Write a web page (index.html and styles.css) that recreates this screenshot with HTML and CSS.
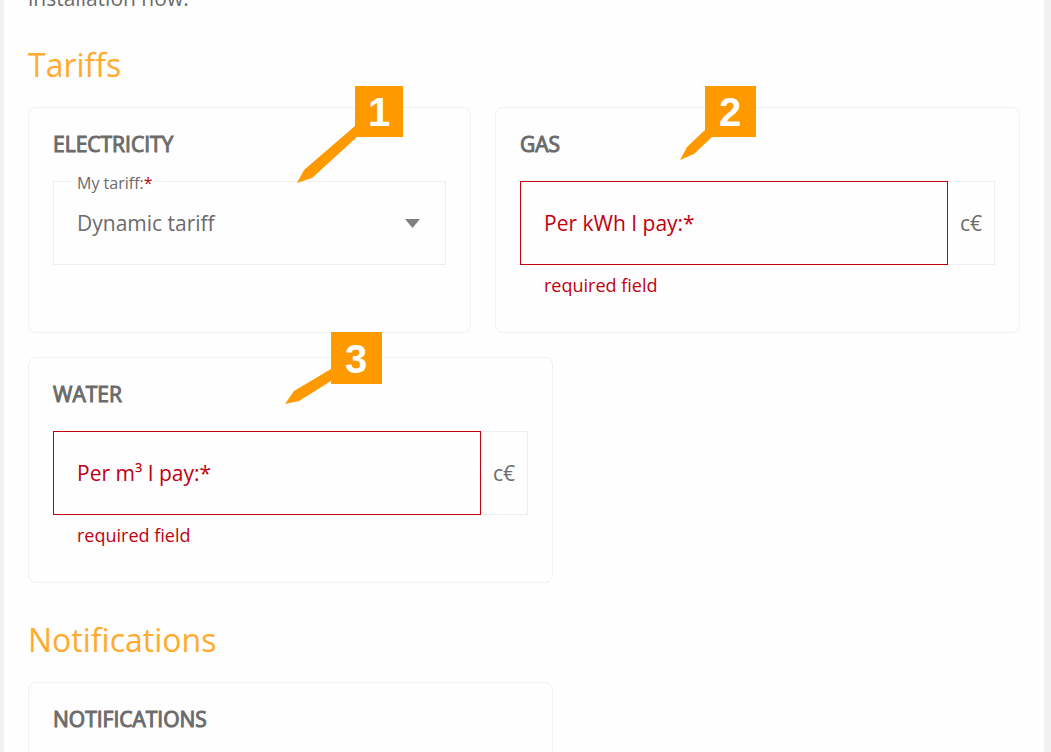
FILE: index.html
```html
<!DOCTYPE html>
<html lang="en">
<head>
    <meta charset="UTF-8">
    <meta name="viewport" content="width=device-width, initial-scale=1.0">
    <title>Tariffs</title>
    <link rel="stylesheet" href="styles.css">
</head>
<body>
    <main class="page">
        <p class="intro">installation now.</p>

        <!-- Tariffs -->
        <h2 class="section-title">Tariffs</h2>
        <div class="cards">
            <section class="card card-small">
                <h3 class="card-title">ELECTRICITY</h3>
                <div class="select-field">
                    <label class="select-label" for="tariff">My tariff:<span class="required">*</span></label>
                    <select class="select" id="tariff">
                        <option>Dynamic tariff</option>
                    </select>
                    <svg class="select-arrow" width="16" height="9" viewBox="0 0 16 9" aria-hidden="true"><path d="M0 0H15L7.5 9Z" fill="#808080"/></svg>
                </div>
                <svg class="callout callout-1" width="106" height="98" viewBox="0 0 106 98">
                    <path d="M58 0H106V51H60L15 92L0 97L7 84L58 40Z" fill="#ff9900"/>
                    <text x="82" y="40">1</text>
                </svg>
            </section>

            <section class="card">
                <h3 class="card-title">GAS</h3>
                <div class="input-group">
                    <div class="input-field">
                        <input class="input" id="gas" type="text" required>
                        <label class="input-label" for="gas">Per kWh I pay:*</label>
                    </div>
                    <span class="unit">c€</span>
                </div>
                <p class="error">required field</p>
                <svg class="callout callout-2" width="76" height="75" viewBox="0 0 76 75">
                    <path d="M25 0H76V51H32L14 68L0 74L7 61L25 44Z" fill="#ff9900"/>
                    <text x="50" y="40">2</text>
                </svg>
            </section>

            <section class="card">
                <h3 class="card-title">WATER</h3>
                <div class="input-group">
                    <div class="input-field">
                        <input class="input" id="water" type="text" required>
                        <label class="input-label" for="water">Per m³ I pay:*</label>
                    </div>
                    <span class="unit">c€</span>
                </div>
                <p class="error">required field</p>
                <svg class="callout callout-3" width="97" height="73" viewBox="0 0 97 73">
                    <path d="M46 0H97V52H46V49L14 69L0 72L9 59L46 37Z" fill="#ff9900"/>
                    <text x="71" y="41">3</text>
                </svg>
            </section>
        </div>

        <!-- Notifications -->
        <h2 class="section-title">Notifications</h2>
        <div class="cards">
            <section class="card">
                <h3 class="card-title">NOTIFICATIONS</h3>
            </section>
        </div>
    </main>
</body>
</html>
```
FILE: styles.css
```css
* { margin: 0; padding: 0; box-sizing: border-box; }
body { height: 100vh; overflow: hidden; background-color: #f1f1f1; color: #6b6b6b; font-family: "Open Sans", "Noto Sans", sans-serif; font-size: 21px; line-height: 32px; }
.page { min-height: 100vh; margin: 0 7px 0 4px; padding: 0 24px; background-color: #fefefe; }
.intro { height: 8px; display: flex; align-items: flex-end; line-height: 20px; }
.section-title { padding: 33px 0 18px; font-size: 32px; font-weight: 400; line-height: 48px; color: #ffab2d; }
.cards { display: flex; flex-wrap: wrap; gap: 24px; }
.card { position: relative; flex: 0 1 525px; min-height: 226px; padding: 24px; border: 1px solid #f1f1f1; border-radius: 8px; }
.card-small { flex-basis: 443px; }
.card-title { margin-bottom: 24px; font-size: 21px; font-weight: 400; line-height: 25px; -webkit-text-stroke: 1px #6b6b6b; }

.select-field { position: relative; }
.select { display: block; width: 100%; height: 84px; padding: 0 23px; border: 1px solid #eee; border-radius: 0; background: transparent; color: inherit; font: inherit; appearance: none; }
.select-label { position: absolute; top: -8px; left: 18px; padding-left: 6px; background-color: #fefefe; font-size: 16px; line-height: 20px; }
.select-arrow { position: absolute; top: 38px; right: 25px; pointer-events: none; }
.required { color: #c00010; }

.input-group { display: flex; }
.input-field { flex: 1; display: grid; align-items: center; }
.input, .input-label { grid-area: 1 / 1; }
.input { width: 100%; height: 84px; padding: 0 23px; border: 1px solid #c00010; background: transparent; color: inherit; font: inherit; }
.input-label { padding: 0 24px; color: #c00010; }
.unit { display: flex; align-items: center; padding: 0 12px; border: 1px solid #eee; border-left: 0; }
.error { padding: 8px 24px 10px; color: #c00010; font-size: 18px; line-height: 24px; }

.callout { position: absolute; z-index: 1; }
.callout text { fill: #fff; font-family: "Liberation Sans", Arial, sans-serif; font-size: 40px; font-weight: 700; text-anchor: middle; }
.callout-1 { top: -22px; left: 268px; }
.callout-2 { top: -22px; left: 184px; }
.callout-3 { top: -26px; left: 256px; }
```
